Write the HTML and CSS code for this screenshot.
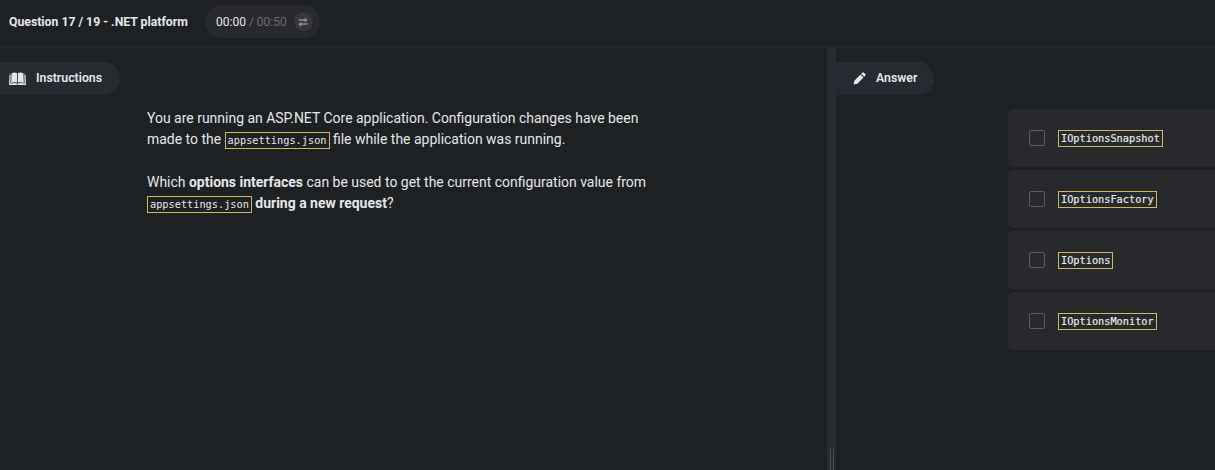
FILE: index.html
```
<!DOCTYPE html>
<html lang="en">
<head>
<meta charset="utf-8">
<title>Question 17 / 19</title>
<link rel="stylesheet" href="styles.css">
</head>
<body>
<header class="topbar">
  <h1 class="title">Question 17 / 19 - .NET platform</h1>
  <div class="timer">
    <span class="elapsed">00:00</span><span class="total">/ 00:50</span>
    <span class="swap"><svg width="10" height="10" viewBox="0 0 10 10"><path d="M0.5 2.3H6.600V0.4L9.8 3 6.600 5.400V3.700H0.5zM9.500 6.300H3.400V4.700L0.2 7.200 3.400 9.700V7.700H9.500z"/></svg></span>
  </div>
</header>
<main class="panes">
  <section class="question">
    <div class="tab">
      <svg class="book" width="17" height="13" viewBox="0 0 17 13"><path d="M2.600 1.200Q6 -0.200 8.100 1.200V10.600Q5.500 9.700 2.200 11zM8.900 1.200Q11 -0.200 14.400 1.200L14.800 11Q11.500 9.700 8.900 10.600z"/><path d="M0.500 2.400H1.700L1.400 11.800Q5 10.500 8.500 11.500 12 10.500 15.600 11.800L15.300 2.400H16.500L17 12.900H10L8.500 12.500 7 12.900H0z"/></svg>
      <span>Instructions</span>
    </div>
    <div class="prose">
      <p>You are running an ASP.NET Core application. Configuration changes have been<br>made to the <code>appsettings.json</code> file while the application was running.</p>
      <p>Which <b>options interfaces</b> can be used to get the current configuration value from<br><code>appsettings.json</code> <b>during a new request</b>?</p>
    </div>
  </section>
  <div class="divider"><span class="grip"></span></div>
  <section class="answers">
    <div class="tab answer-tab">
      <svg class="pencil" width="13" height="13" viewBox="0 0 13 13"><path d="M0.500 12.500L1.300 8.700 7.500 2.500 10.500 5.500 4.300 11.700zM8.200 1.800L9.300 0.700Q10.100 0 10.900 0.700L12.300 2.100Q13 2.900 12.300 3.700L11.200 4.800z"/></svg>
      <span>Answer</span>
    </div>
    <div class="options">
      <label class="option"><span class="box"></span><code>IOptionsSnapshot</code></label>
      <label class="option"><span class="box"></span><code>IOptionsFactory</code></label>
      <label class="option"><span class="box"></span><code>IOptions</code></label>
      <label class="option"><span class="box"></span><code>IOptionsMonitor</code></label>
    </div>
  </section>
</main>
</body>
</html>
```
FILE: styles.css
```
* { box-sizing: border-box; }
body {
  margin: 0;
  height: 470px;
  overflow: hidden;
  display: flex;
  flex-direction: column;
  background: #1d2124;
  color: #e6e7e8;
  font-family: Roboto, sans-serif;
}
svg { display: block; fill: currentColor; }
.topbar {
  height: 48px;
  flex: none;
  display: flex;
  align-items: center;
  padding: 0 0 4px 9px;
  border-bottom: 1px solid #23272a;
}
.title { width: 179px; margin: 0 17px 0 0; font-size: 12.260px; font-weight: 700; white-space: nowrap; }
.timer {
  width: 115px;
  height: 33px;
  padding-left: 11px;
  border-radius: 17px;
  background: #27292d;
  display: flex;
  align-items: center;
  font-size: 12px;
}
.total { margin-left: 3px; color: #6c6e71; }
.swap {
  width: 19px;
  height: 19px;
  margin-left: 7px;
  border-radius: 50%;
  background: #35373a;
  color: #8b8d8f;
  display: grid;
  place-items: center;
}
.panes { flex: 1; display: flex; }
.question { width: 827px; padding-top: 14px; }
.tab {
  width: 120px;
  height: 33px;
  padding: 0 0 1px 9px;
  border-radius: 0 17px 17px 0;
  background: #272a31;
  display: flex;
  align-items: center;
  font-size: 12.300px;
  font-weight: 600;
}
.book { margin: 1px 10px 0 0; }
.prose { padding: 13px 0 0 147px; font-size: 13.980px; line-height: 21px; white-space: nowrap; }
.prose p { margin: 0 0 21px; }
code {
  padding: 1px 2px 2px;
  border: 1px solid #d0b957;
  font-family: "DejaVu Sans Mono", monospace;
  font-size: 10.28px;
}
.divider {
  width: 9px;
  background: #272b32;
  display: flex;
  align-items: flex-end;
  justify-content: center;
}
.grip { width: 4px; height: 21px; border: solid #4c5056; border-width: 0 1px; }
.answers { flex: 1; padding-top: 14px; }
.answer-tab { width: 98px; padding-left: 17px; }
.pencil { margin: 1px 10px 0 0; }
.options { display: flex; flex-direction: column; gap: 3px; padding: 14px 0 0 172px; }
.option {
  height: 58px;
  padding-left: 21px;
  border-radius: 5px 0 0 5px;
  background: #27292c;
  display: flex;
  align-items: center;
}
.option code { -webkit-text-stroke: 0.2px currentColor; }
.box { width: 16px; height: 16px; margin-right: 13px; border: 1px solid #5b5d60; border-radius: 2px; }
```
